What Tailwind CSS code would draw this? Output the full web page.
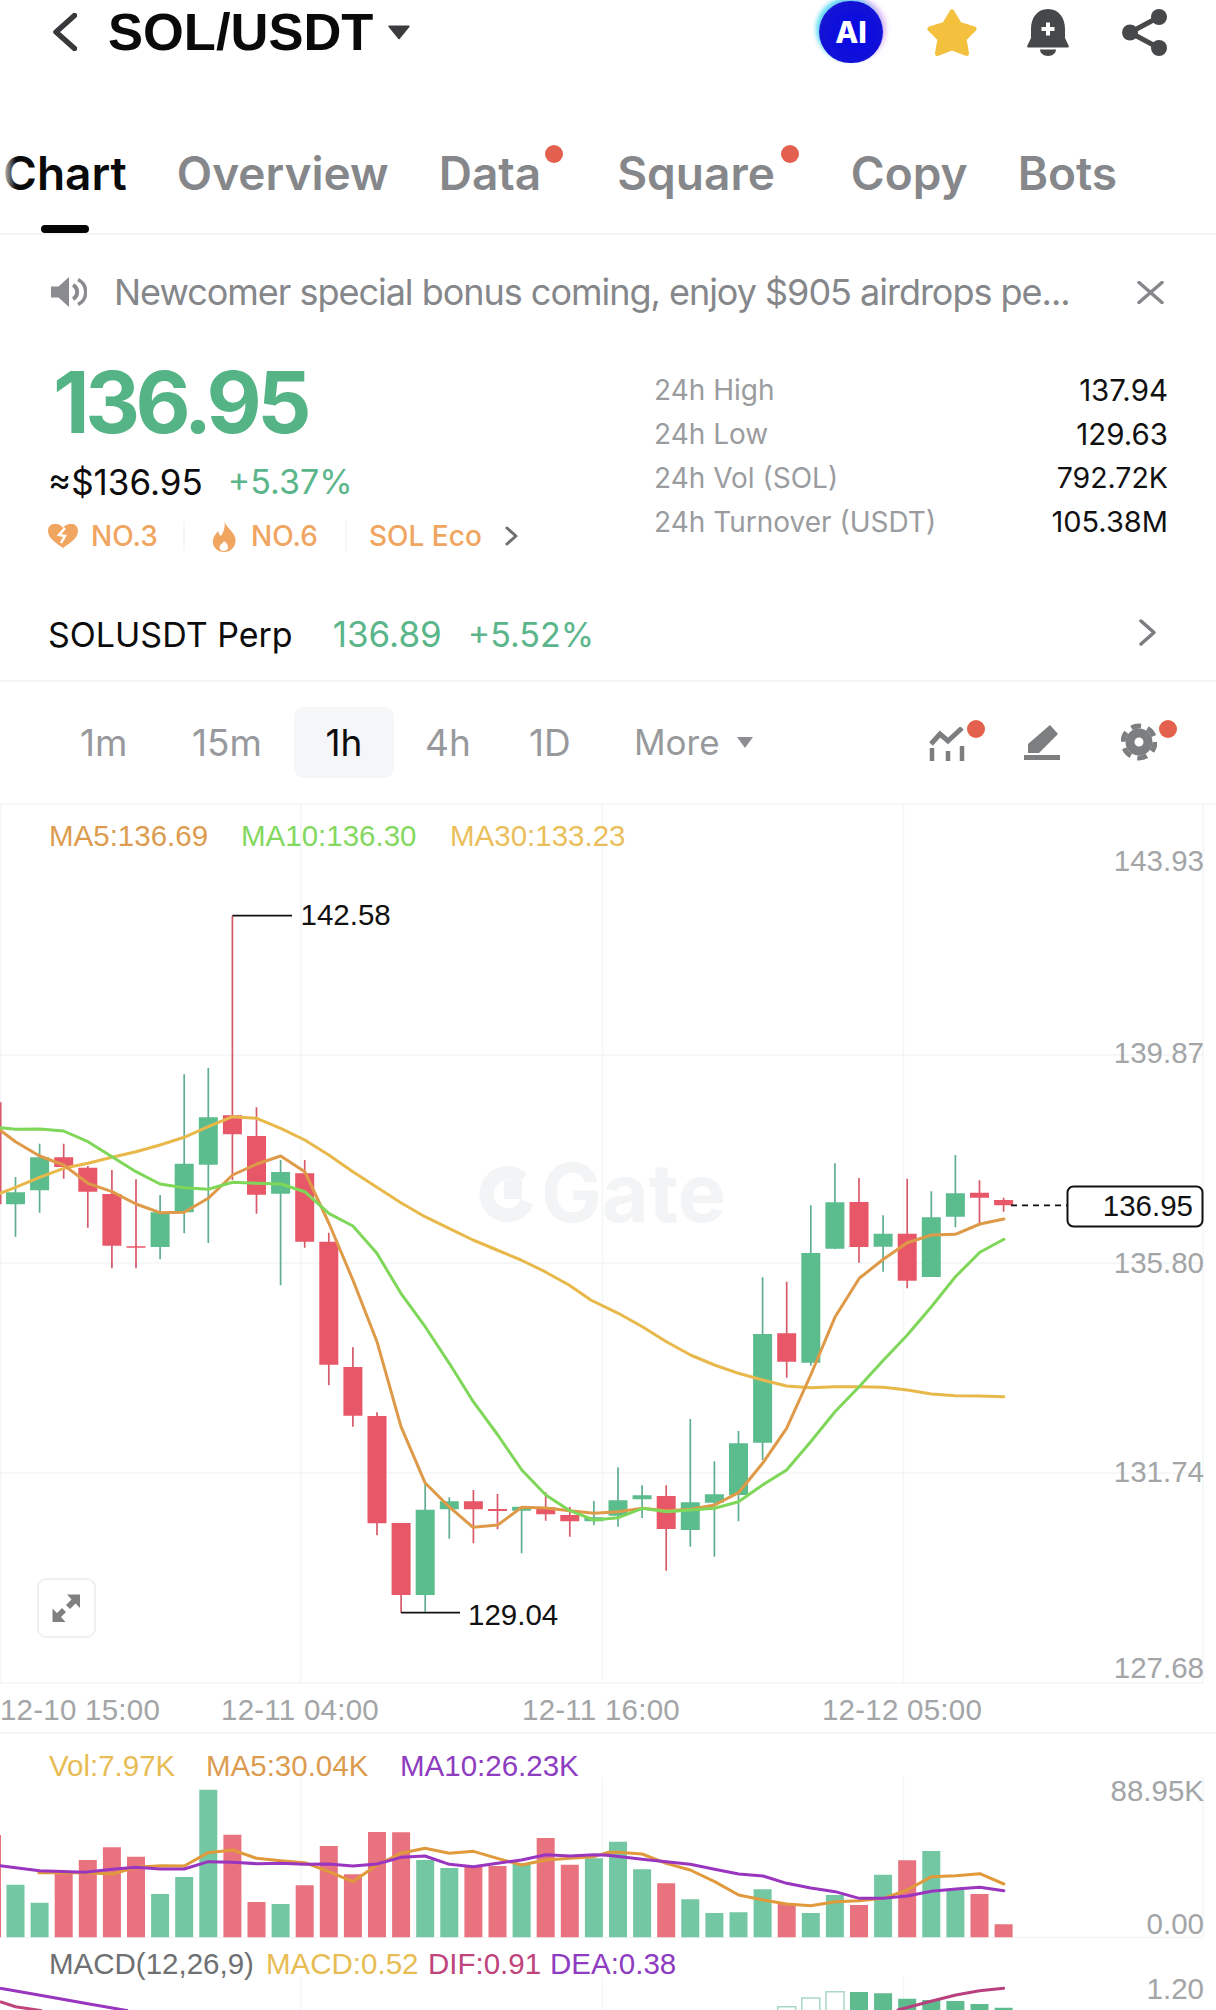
<!DOCTYPE html>
<html><head><meta charset="utf-8"><script src="https://cdn.jsdelivr.net/npm/@tailwindcss/browser@4"></script></head>
<body class="bg-white">
<div class="w-[1216px] h-[2010px] overflow-hidden bg-white font-['Inter',sans-serif]">
  <!-- header -->
  <div class="flex items-center h-[64px] pl-[53px] pr-[49px]">
    <svg class="w-[24px] h-[38px]" viewBox="0 0 24 38"><path d="M21.500 2.500 3 19l18.500 16.500" fill="none" stroke="#38393b" stroke-width="5.500" stroke-linecap="round" stroke-linejoin="round"/></svg>
    <span class="ml-[31px] font-['Liberation_Sans'] font-bold text-[52.500px] leading-[64px] text-[#0a0a0a]">SOL/USDT</span>
    <svg class="ml-[15px] w-[22px] h-[15px]" viewBox="0 0 22 15"><path d="M1 0.500h20a.8.8 0 0 1 .6 1.300L11.600 14a.8.8 0 0 1-1.200 0L.4 1.800A.8.8 0 0 1 1 .5z" fill="#3c3c3e"/></svg>
    <div class="ml-auto flex items-center">
      <div class="w-[64px] h-[62px] rounded-full flex items-center justify-center bg-[radial-gradient(circle_at_55%_55%,#0808e6_0%,#1212d6_65%,#2c2ccf_100%)] shadow-[-3px_-3px_4px_rgba(70,215,240,0.85),3px_-3px_5px_rgba(190,120,240,0.55)]"><span class="text-white font-extrabold text-[30px] leading-none font-['Inter']">AI</span></div>
      <svg class="ml-[44px] w-[50px] h-[47px]" viewBox="0 0 50 47"><path d="M25 3 32.500 15.500 47 20 37 30 39.500 44.500 25 39 10.500 44.500 13 30 3 20 17.500 15.500z" fill="#f4c13f" stroke="#f4c13f" stroke-width="5" stroke-linejoin="round"/></svg>
      <svg class="ml-[50px] w-[42px] h-[47px]" viewBox="0 0 42 47"><path d="M21 0C10 0 4 9 4 20v9l-3.600 7.500C-.2 37.800.4 38.500 1.500 38.500h39c1.100 0 1.700-.7 1.100-2L38 29v-9C38 9 32 0 21 0z" fill="#47484a"/><path d="M13 40.500h16c0 3.600-3.600 6.500-8 6.500s-8-2.900-8-6.500z" fill="#47484a"/><path d="M21 13.500v13M14.500 20h13" stroke="#fff" stroke-width="4"/></svg>
      <svg class="ml-[53px] w-[45px] h-[47px]" viewBox="0 0 45 47"><path d="M37 8 8 23.500 37 39" fill="none" stroke="#47484a" stroke-width="5"/><circle cx="37" cy="8" r="8" fill="#47484a"/><circle cx="8" cy="23.500" r="8" fill="#47484a"/><circle cx="37" cy="39" r="8" fill="#47484a"/></svg>
    </div>
  </div>
  <!-- tabs -->
  <div class="relative h-[171px] border-b-2 border-[#f3f4f5]">
    <div class="flex items-start gap-[50px] pl-[3px] pt-[81px] font-semibold text-[46px] leading-[56px] text-[#85878a]">
      <span class="text-[#0a0a0a]">Chart</span>
      <span>Overview</span>
      <span class="relative mr-[26px]">Data<i class="absolute right-[-22px] top-[0px] w-[18px] h-[18px] rounded-full bg-[#e4604e]"></i></span>
      <span class="relative mr-[26px]">Square<i class="absolute right-[-24px] top-[0px] w-[18px] h-[18px] rounded-full bg-[#e4604e]"></i></span>
      <span>Copy</span>
      <span>Bots</span>
    </div>
    <div class="absolute left-0 top-[78px] w-[16px] h-[70px] bg-gradient-to-r from-white to-transparent"></div>
    <div class="absolute left-[41px] bottom-0 w-[48px] h-[8px] rounded-[4px] bg-[#050505]"></div>
  </div>
  <!-- notice -->
  <div class="flex items-center h-[114px] pl-[51px] pr-[52px]">
    <svg class="w-[36px] h-[30px] shrink-0" viewBox="0 0 36 30"><path d="M0 9.500h7.500L18 0v30L7.500 20.500H0z" fill="#8a8c8f"/><path d="M22 8a8 8 0 0 1 0 14" fill="none" stroke="#8a8c8f" stroke-width="4"/><path d="M27 2.500a14 14 0 0 1 0 25" fill="none" stroke="#8a8c8f" stroke-width="3.500"/></svg>
    <span class="ml-[27px] text-[36px] tracking-[-1.02px] leading-[44px] text-[#85878a] whitespace-nowrap">Newcomer special bonus coming, enjoy $905 airdrops pe...</span>
    <svg class="ml-auto w-[27px] h-[23px]" viewBox="0 0 27 23"><path d="M2 1.500 25 21.500M25 1.500 2 21.500" stroke="#85878a" stroke-width="3.500" stroke-linecap="round"/></svg>
  </div>
  <!-- info -->
  <div class="flex h-[241px] pl-[48px] pr-[48px]">
    <div class="w-[606px]">
      <div class="mt-[23px] h-[61px] leading-[61px] text-[85px] font-bold tracking-[-4.500px] pl-[5px] text-[#55b486]">136.95</div>
      <div class="mt-[29px] h-[40px] flex items-center gap-[25px] text-[35px] leading-[40px]">
        <span class="text-[#0c0c0c]">≈$136.95</span><span class="text-[#5ab68a] text-[34px]">+5.37%</span>
      </div>
      <div class="mt-[14px] h-[40px] flex items-center text-[28px] font-medium text-[#f0a560]">
        <svg class="w-[30px] h-[24px]" viewBox="0 0 30 24"><path d="M15 24C8 19 0 14 0 7c0-9 11-9 15-3 4-6 15-6 15 3 0 7-8 12-15 17z" fill="#f0a560"/><path d="M17 4 11 11l6 1-4 7" fill="none" stroke="#fff" stroke-width="2.500"/></svg>
        <span class="ml-[13px] w-[66px]">NO.3</span>
        <i class="ml-[26px] w-[2px] h-[30px] bg-[#f6f6f6]"></i>
        <svg class="ml-[27px] w-[24px] h-[31px]" viewBox="0 0 24 31"><path d="M12.500 0c1 6 8 9 10.500 16 2.500 8-3.500 15-11 15S-1 25 1.500 17C2.500 14 4.500 12 6.500 10c0 3 1 4 2.500 5 2.500-4 4.500-9 3.500-15z" fill="#f0a560"/><path d="M12 20c3 2.500 4.500 4.500 4 7-.5 2-2.500 3-4.500 3s-4-1.200-4-3.500c0-2.500 3-4 4.500-6.500z" fill="#fff"/></svg>
        <span class="ml-[15px] w-[67px]">NO.6</span>
        <i class="ml-[27px] w-[2px] h-[30px] bg-[#f6f6f6]"></i>
        <span class="ml-[22px]">SOL Eco</span>
        <svg class="ml-[23px] w-[14px] h-[20px]" viewBox="0 0 14 20"><path d="M2 2l9 8-9 8" fill="none" stroke="#6e6e70" stroke-width="3" stroke-linecap="round" stroke-linejoin="round"/></svg>
      </div>
    </div>
    <div class="flex-1 pt-[19px] text-[28px]">
      <div class="flex justify-between h-[44px] leading-[44px]"><span class="text-[#9a9c9f]">24h High</span><span class="text-[#111] text-[29.500px]">137.94</span></div>
      <div class="flex justify-between h-[44px] leading-[44px]"><span class="text-[#9a9c9f]">24h Low</span><span class="text-[#111] text-[29.500px]">129.63</span></div>
      <div class="flex justify-between h-[44px] leading-[44px]"><span class="text-[#9a9c9f]">24h Vol (SOL)</span><span class="text-[#111] text-[28.500px]">792.72K</span></div>
      <div class="flex justify-between h-[44px] leading-[44px]"><span class="text-[#9a9c9f]">24h Turnover (USDT)</span><span class="text-[#111] text-[29px]">105.38M</span></div>
    </div>
  </div>
  <!-- perp -->
  <div class="flex items-center h-[92px] pl-[48px] pr-[60px] pb-[2px] border-b-2 border-[#f3f4f5] text-[35px]">
    <span class="text-[#0c0c0c] text-[34px]">SOLUSDT Perp</span>
    <span class="ml-[40px] text-[#5ab68a]">136.89</span>
    <span class="ml-[26px] text-[#5ab68a] text-[34px]">+5.52%</span>
    <svg class="ml-auto -mt-[3px] w-[17px] h-[27px]" viewBox="0 0 17 27"><path d="M2 2l13 11.500L2 25" fill="none" stroke="#7b7d80" stroke-width="3.500" stroke-linecap="round" stroke-linejoin="round"/></svg>
  </div>
  <!-- timeframe -->
  <div class="relative flex items-center h-[121px] pl-[80px] text-[37px] text-[#97999c]">
    <span class="w-[112px]">1m</span>
    <span class="w-[102px]">15m</span>
    <span class="w-[100px] h-[71px] rounded-[10px] bg-[#f5f6f7] flex items-center justify-center text-[#0c0c0c]">1h</span>
    <span class="ml-[31px] w-[104px]">4h</span>
    <span class="w-[105px]">1D</span>
    <span class="text-[35px]">More</span>
    <svg class="ml-[17px] w-[16px] h-[11px]" viewBox="0 0 16 11"><path d="M0 0h16L8 11z" fill="#8c8e91"/></svg>
    <div class="absolute left-[929px] top-[45px]">
      <svg class="w-[37px] h-[34px]" viewBox="0 0 37 34"><path d="M2 17 11 7l8 7L33 1" fill="none" stroke="#7c7e80" stroke-width="5"/><path d="M3 21v13M19 24v10M33 19v15" stroke="#7c7e80" stroke-width="4.500"/></svg>
      <i class="absolute left-[38px] top-[-7px] w-[18px] h-[18px] rounded-full bg-[#e4604e]"></i>
    </div>
    <svg class="absolute left-[1024px] top-[43px] w-[36px] h-[35px]" viewBox="0 0 36 35"><path d="M26 0l8 9-19 19H4v-9z" fill="#7c7e80"/><rect x="0" y="30" width="36" height="5" fill="#7c7e80"/></svg>
    <div class="absolute left-[1121px] top-[41px]">
      <svg class="w-[36px] h-[38px]" viewBox="0 0 36 38"><circle cx="18" cy="19" r="9" fill="none" stroke="#7c7e80" stroke-width="9"/><circle cx="18" cy="19" r="16" fill="none" stroke="#7c7e80" stroke-width="5" stroke-dasharray="10 6.750"/></svg>
      <i class="absolute left-[38px] top-[-3px] w-[18px] h-[18px] rounded-full bg-[#e4604e]"></i>
    </div>
  </div>
  <!-- chart canvas -->
  <svg class="block w-[1216px] h-[1207px]" viewBox="0 803 1216 1207">
    <!-- grid -->
    <path d="M0 804H1216M0 1055H1203M0 1263H1203M0 1473H1203M0 1683H1203M.5 804V1683M301 804V1683M602.500 804V1683M903.500 804V1683M1203 804V1683" fill="none" stroke="#f4f5f6" stroke-width="1.500"/>
    <path d="M0 1733H1216" stroke="#f0f1f2" stroke-width="1.500"/>
    <path d="M301 1777V1937M602.500 1777V1937M903.500 1777V1937M1203 1777V1937M0 1937.500H1203M301 1977V2010M602.500 1977V2010M903.500 1977V2010" fill="none" stroke="#f4f5f6" stroke-width="1.500"/>
    <!-- watermark -->
    <path d="M522 1179A21 21 0 1 0 527 1202" fill="none" stroke="#f3f4f5" stroke-width="14"/>
    <rect x="504" y="1181" width="18" height="18" fill="#f3f4f5"/>
    <text x="541" y="1222" class="font-['Inter'] font-bold text-[81px] fill-[#f3f4f5]">Gate</text>
    <!-- wicks -->
    <g fill="none" stroke-width="1.700">
      <path stroke="#5fae90" d="M15.500 1177V1236.700M39.600 1143.700V1212.700M160.100 1195V1259.300M184.200 1074.300V1233.300M208.300 1068V1243M280.600 1160V1285.300M425.200 1483.300V1611.700M449.300 1497.300V1538.700M521.600 1506.700V1553.300M593.900 1501V1525M618 1467.300V1526.700M642.100 1485.300V1518M690.300 1419V1546.700M714.400 1461.300V1556.700M738.500 1431V1521.300M762.600 1277.300V1460M810.800 1205.300V1365.700M834.900 1163.300V1249M883.100 1215.300V1271.700M931.300 1191.300V1277M955.400 1155V1227.300"/>
      <path stroke="#d75a6b" d="M.7 1102.300V1204.300M63.700 1143.700V1178.700M87.800 1166V1227.700M111.900 1170V1268.300M136 1179.300V1268.300M232.400 915.700V1180M256.500 1107.300V1213.700M304.700 1160V1247.700M328.800 1232.700V1385.300M352.900 1347.300V1426.700M377 1412.300V1535.300M401.100 1595V1612.700M473.400 1490V1543.300M497.500 1494V1529.300M545.700 1492.300V1520.700M569.800 1506.700V1536.700M666.200 1485.300V1570.700M786.700 1281.700V1377.700M859 1178V1262.700M907.200 1178.700V1288.300M979.500 1180.300V1225M1003.600 1197.700V1211.700"/>
    </g>
    <!-- bodies -->
    <path fill="#5bbd8e" d="M6 1192.300h19V1204.300h-19zM30.100 1157.300h19V1190.300h-19zM150.600 1212.300h19V1247h-19zM174.700 1163.700h19V1212.300h-19zM198.800 1117.300h19V1164.700h-19zM271.100 1172h19V1193.700h-19zM415.700 1509.700h19V1595h-19zM439.800 1501.300h19V1509.300h-19zM512.100 1506.700h19V1510.700h-19zM584.400 1517.300h19V1521.300h-19zM608.500 1500.300h19V1515.700h-19zM632.600 1495.300h19V1499.300h-19zM680.800 1502.300h19V1530h-19zM704.900 1494.300h19V1502.700h-19zM729 1443.300h19V1495h-19zM753.100 1334h19V1442.700h-19zM801.300 1253h19V1362.700h-19zM825.400 1202.300h19V1248.700h-19zM873.600 1233.700h19V1246.700h-19zM921.800 1217.300h19V1277h-19zM945.900 1193.300h19V1216.700h-19z"/>
    <path fill="#e85767" d="M54.200 1157.300h19V1167h-19zM78.300 1167.700h19V1191.700h-19zM102.400 1194h19V1245.700h-19zM126.500 1246.300h19V1247.700h-19zM222.900 1115.300h19V1134.300h-19zM247 1136h19V1194.700h-19zM295.200 1173.300h19V1241.700h-19zM319.300 1241.700h19V1364.700h-19zM343.400 1367h19V1415.700h-19zM367.500 1416h19V1523.300h-19zM391.600 1523h19V1595h-19zM463.900 1501.300h19V1509.300h-19zM488 1509h19V1511h-19zM536.200 1507.300h19V1514.300h-19zM560.300 1515h19V1521.300h-19zM656.700 1496h19V1529h-19zM777.200 1333.300h19V1361.700h-19zM849.500 1202h19V1247h-19zM897.700 1233.700h19V1280.700h-19zM970 1192.700h19V1197.700h-19zM994.100 1200h19V1205.300h-19z"/>
    <!-- MA lines -->
    <g fill="none" stroke-width="3" stroke-linejoin="round" stroke-linecap="round">
      <polyline stroke="#e8b84b" points="0,1193.300 15.500,1187.300 39.600,1177.300 63.600,1168.300 88,1163.300 112,1157.300 136,1151.700 160,1145 184.200,1137.300 208.200,1126.700 232.600,1116.700 256.700,1118.300 280.700,1128.300 304.800,1140 328.800,1155 352.900,1171.700 376.900,1187.300 400.900,1202.700 425,1216.700 449,1228.300 473,1240 497,1250 521,1260 545,1271.700 569,1285 590.800,1300 618.300,1313.300 642.400,1326.700 666.400,1341.700 690.500,1355 714.500,1365 738.500,1373.300 762.600,1380 786.600,1386 810.700,1387.700 835,1386.700 859.100,1386.700 883.600,1387.300 907.300,1390 931.400,1394 955.400,1395.700 980,1396 1003.900,1396.700"/>
      <polyline stroke="#de9a48" points="0,1130 15.500,1141.700 39.600,1156 63.600,1165 88,1183.300 112,1191.700 136,1204 160,1212.700 184.200,1212.300 208.200,1198.300 232.600,1175 256.700,1164 280.700,1156 304.800,1171.700 328.800,1223 352.900,1280 377,1341.700 401,1426.700 425,1482.700 449,1506.700 473,1527.300 497.800,1525 521.800,1507.300 545.800,1508 569.900,1510.700 594,1513.300 618.300,1511.700 642.400,1508.300 666.400,1510.700 690.500,1509.300 714.500,1505 738.500,1492.700 762.600,1463.300 786.600,1428.300 810.700,1375 835.200,1316.700 859.300,1278.300 883.300,1259.300 907.300,1242.700 931.400,1235 955.400,1234.300 979.900,1224 1003.900,1219"/>
      <polyline stroke="#7fd75a" points="0,1127.700 15.500,1129.300 39.600,1129 63.600,1131 88,1141.700 112,1156.700 136,1171.700 160,1184 184.200,1187.700 208.200,1189.300 232.600,1182.300 256.700,1183.300 280.700,1184 304.800,1191.700 328.800,1213.300 352.900,1226 376.900,1253.300 400.900,1293.300 425.200,1326.700 449.300,1363.300 473.300,1401.700 497.800,1435 521.800,1470 545.800,1495 569.900,1510.700 593.900,1520 618.300,1517.700 642.400,1508.300 666.400,1511.700 690.500,1510 714.500,1508.300 738.500,1501.700 762.600,1485 786.600,1470 810.700,1441.700 835,1411.700 859.100,1386.700 883.600,1360 907.300,1335 931.400,1306.700 955.400,1276.700 979.900,1252.300 1003.900,1239.300"/>
    </g>
    <!-- extremes and last price -->
    <path d="M232.400 915.700H292M401.100 1612.700H460" fill="none" stroke="#111" stroke-width="1.700"/>
    <path d="M1011 1205.300H1067" fill="none" stroke="#111" stroke-width="1.700" stroke-dasharray="6 5"/>
    <rect x="1067.500" y="1186.500" width="135" height="40" rx="6" fill="#fff" stroke="#111" stroke-width="2"/>
    <g class="font-['Liberation_Sans'] text-[29.500px]">
      <text x="300.500" y="925" class="fill-[#111]">142.58</text>
      <text x="468" y="1625" class="fill-[#111]">129.04</text>
      <text x="1193" y="1216" text-anchor="end" class="fill-[#111]">136.95</text>
      <g text-anchor="end" class="fill-[#a3a5a7]">
        <text x="1204" y="871">143.93</text>
        <text x="1204" y="1063">139.87</text>
        <text x="1204" y="1273">135.80</text>
        <text x="1204" y="1482">131.74</text>
        <text x="1204" y="1678">127.68</text>
        <text x="1204" y="1801">88.95K</text>
        <text x="1204" y="1934">0.00</text>
        <text x="1204" y="1999">1.20</text>
      </g>
      <g text-anchor="middle" class="fill-[#a3a5a7] tracking-[0.25px]">
        <text x="80" y="1720">12-10 15:00</text>
        <text x="300" y="1720">12-11 04:00</text>
        <text x="601" y="1720">12-11 16:00</text>
        <text x="902" y="1720">12-12 05:00</text>
      </g>
      <g>
        <text x="49" y="846" class="fill-[#dc9c50]">MA5:136.69</text>
        <text x="241" y="846" class="fill-[#84d860]">MA10:136.30</text>
        <text x="450" y="846" class="fill-[#eabf5b]">MA30:133.23</text>
        <text x="49" y="1776" class="fill-[#e7bc53]">Vol:7.97K</text>
        <text x="206" y="1776" class="fill-[#dc9c50]">MA5:30.04K</text>
        <text x="400" y="1776" class="fill-[#8e3cc0]">MA10:26.23K</text>
        <text x="49" y="1974" class="fill-[#6e7072]">MACD(12,26,9)</text>
        <text x="266" y="1974" class="fill-[#e7bc53]">MACD:0.52</text>
        <text x="428" y="1974" class="fill-[#c0447c]">DIF:0.91</text>
        <text x="550" y="1974" class="fill-[#8e3cc0]">DEA:0.38</text>
      </g>
    </g>
    <!-- volume bars -->
    <path fill="#73c8a3" d="M6.500 1884.700h18V1937.300h-18zM30.600 1902.700h18V1937.300h-18zM151.100 1894h18V1937.300h-18zM175.200 1877h18V1937.300h-18zM199.300 1789.700h18V1937.300h-18zM271.600 1904h18V1937.300h-18zM416.200 1860h18V1937.300h-18zM440.300 1868h18V1937.300h-18zM512.600 1863.300h18V1937.300h-18zM584.900 1858.300h18V1937.300h-18zM609 1841.700h18V1937.300h-18zM633.100 1869.300h18V1937.300h-18zM681.300 1899.300h18V1937.300h-18zM705.400 1913h18V1937.300h-18zM729.500 1912.300h18V1937.300h-18zM753.600 1889.300h18V1937.300h-18zM801.800 1913h18V1937.300h-18zM825.900 1895h18V1937.300h-18zM874.100 1874.700h18V1937.300h-18zM922.300 1851h18V1937.300h-18zM946.400 1890h18V1937.300h-18z"/>
    <path fill="#e8727e" d="M0 1835h1V1937.300h-1zM54.700 1872.700h18V1937.300h-18zM78.800 1860h18V1937.300h-18zM102.900 1847.300h18V1937.300h-18zM127 1856.700h18V1937.300h-18zM223.400 1834.700h18V1937.300h-18zM247.500 1902h18V1937.300h-18zM295.700 1885.300h18V1937.300h-18zM319.800 1846h18V1937.300h-18zM343.900 1874.300h18V1937.300h-18zM368 1832h18V1937.300h-18zM392.100 1832.300h18V1937.300h-18zM464.400 1866.700h18V1937.300h-18zM488.500 1866h18V1937.300h-18zM536.700 1838h18V1937.300h-18zM560.800 1864.700h18V1937.300h-18zM657.200 1883.300h18V1937.300h-18zM777.700 1903.300h18V1937.300h-18zM850 1905h18V1937.300h-18zM898.200 1860.300h18V1937.300h-18zM970.500 1894h18V1937.300h-18zM994.600 1924.300h18V1937.300h-18z"/>
    <!-- volume lines -->
    <g fill="none" stroke-width="3" stroke-linejoin="round" stroke-linecap="round">
      <g transform="translate(0 1730) scale(.38775 .33333)">
        <polyline vector-effect="non-scaling-stroke" stroke="#e09a3c" points="100,428 220,428 290,432 351,412 413,407 475,408 537,368 600,360 662,385 724,392 786,398 848,425 910,455 972,405 1034,370 1096,355 1159,370 1221,364 1283,385 1345,405 1408,390 1470,385 1532,380 1568,367"/>
        <polyline vector-effect="non-scaling-stroke" stroke="#9a35c0" points="0,407 102,422 220,427 289,418 351,412 413,417 475,417 537,395 600,397 662,401 724,400 786,403 848,402 910,408 972,402 1034,382 1096,378 1159,403 1221,410 1283,400 1345,390 1408,374 1470,378 1532,374 1568,376"/>
      </g>
      <g transform="translate(608 1730) scale(.38775 .33333)">
        <polyline vector-effect="non-scaling-stroke" stroke="#e09a3c" points="0,367 26,367 88,372 150,400 212,420 275,455 337,495 400,510 461,522 523,527 586,515 648,512 710,505 772,480 834,440 897,437 959,431 1021,462"/>
        <polyline vector-effect="non-scaling-stroke" stroke="#9a35c0" points="0,376 88,388 150,395 212,403 275,418 337,432 400,438 461,460 523,474 586,485 648,505 710,505 772,498 834,484 897,477 959,472 1021,482"/>
      </g>
    </g>
    <!-- MACD -->
    <path fill="none" stroke="#a9d8c3" stroke-width="1.500" d="M777.700 2012V2006.700H795.700V2012M801.800 2012V1998H819.800V2012M826 2012V1991.700H844V2012"/>
    <path fill="#5dbb8e" d="M850 1992h18V2010h-18zM874.100 1993.300h18V2010h-18zM898.200 1998.700h18V2010h-18zM922.300 2000h18V2010h-18zM946.400 2001h18V2010h-18zM970.500 2004h18V2010h-18zM994.600 2007.700h18V2010h-18z"/>
    <path fill="none" stroke="#b8407e" stroke-width="3" stroke-linecap="round" d="M898 2010 929 2001.700 955.800 1995 979.500 1990.700 1003.600 1988.300"/>
    <path fill="none" stroke="#9a35c0" stroke-width="3" d="M0 1988.300 38.800 1995 85 2003.300 128 2010.700"/>
    <path fill="none" stroke="#c0447c" stroke-width="3" d="M0 2001.700 15.500 2006.700 42 2010.700"/>
    <!-- fullscreen button -->
    <rect x="38" y="1579" width="57" height="58" rx="8" fill="#fff" stroke="#f0f0f1" stroke-width="2"/>
    <path d="M80 1594.500V1608L75.500 1603.500 70 1609 66 1605 71.500 1599.500 67 1594.500zM52.500 1622V1608.500L57 1613 62 1608 66 1612 61 1617 65.500 1622z" fill="#808080"/>
  </svg>
</div>
</body></html>
